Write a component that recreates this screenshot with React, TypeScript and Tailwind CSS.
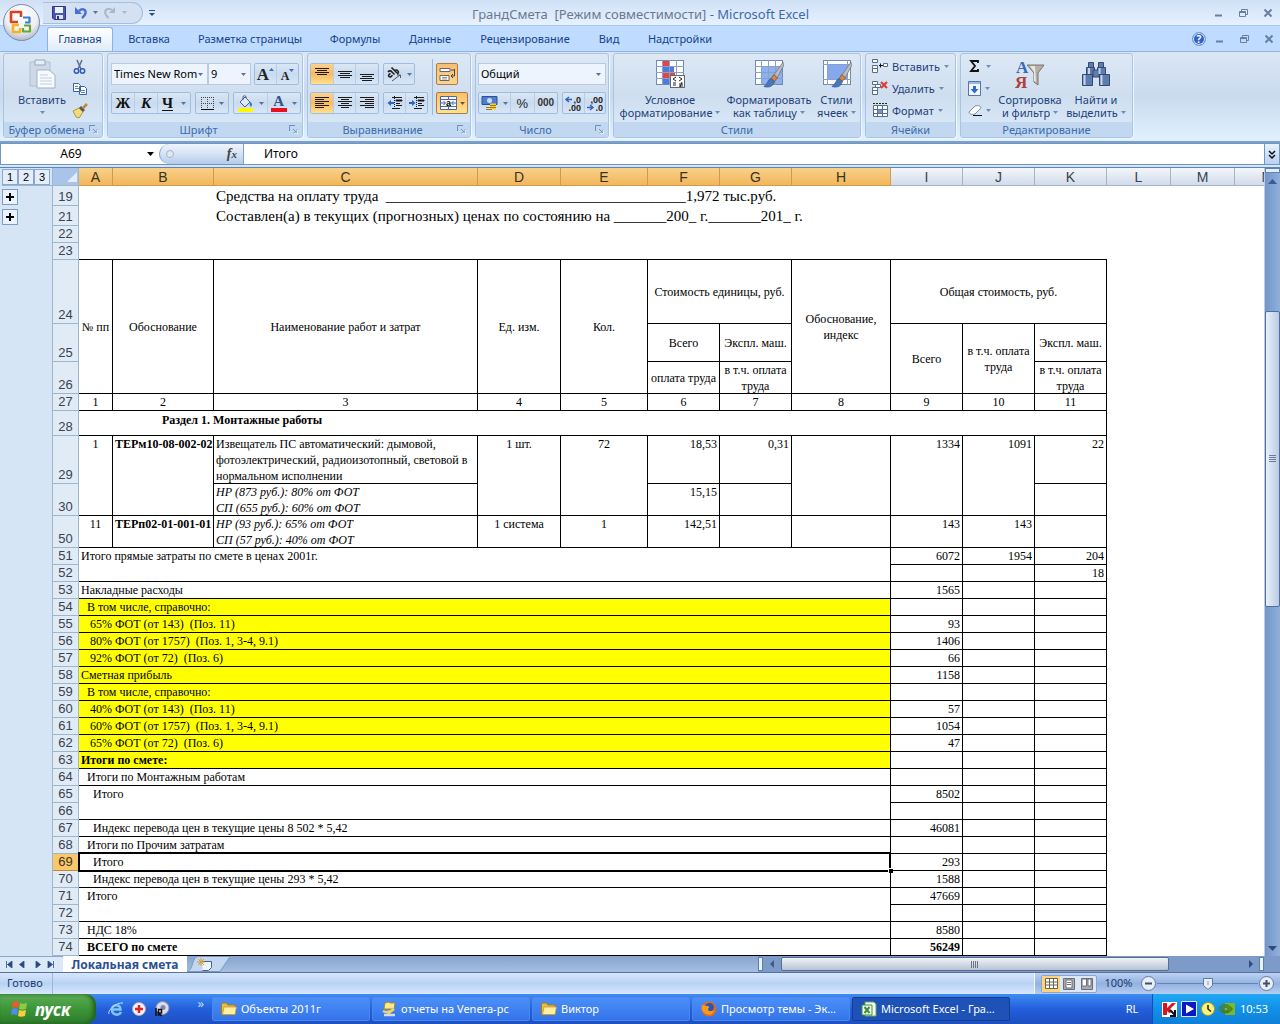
import React from "react";

const UI = "font-['Noto_Sans','Open_Sans',sans-serif]";

function Caret({ className = "" }: { className?: string }) {
  return (
    <svg width="5" height="3" viewBox="0 0 5 3" className={"shrink-0 " + className} aria-hidden="true">
      <path d="M0 0h5L2.5 3z" fill="currentColor" />
    </svg>
  );
}

function Launcher({ label }: { label: string }) {
  return (
    <button aria-label={label} className="ml-auto mr-1 text-[#6d8fbd]">
      <svg width="9" height="9" viewBox="0 0 9 9" fill="none" stroke="currentColor">
        <path d="M.5 6V.5H6M4 4l3 3M8 4.5V8H4.500" />
        <path d="M8.500 5v3.500H5" stroke="#fff" strokeOpacity=".7" />
      </svg>
    </button>
  );
}

function Group({ title, width, launcher, children }: { title: string; width: string; launcher?: boolean; children: React.ReactNode }) {
  return (
    <section
      aria-label={title}
      className={
        "flex h-[85px] shrink-0 flex-col overflow-hidden rounded-[3px] border border-[#a9c3e2] bg-linear-to-b from-[#dde8f5] via-[#cfdeef] to-[#dcebfa] shadow-[1px_1px_0_#eef6ff] " +
        width
      }
    >
      <div className="h-[68px]">{children}</div>
      <div className="flex h-[15px] items-center whitespace-nowrap bg-[#c1d8f0] text-[11px] leading-[15px] text-[#3e6aaa]">
        <span className={launcher ? "ml-auto" : "mx-auto"}>{title}</span>
        {launcher && <Launcher label={title + ": параметры"} />}
      </div>
    </section>
  );
}

const strip = "flex h-[22px] shrink-0 items-stretch rounded-[2px] border border-[#9ebde2] bg-linear-to-b from-[#dbe7f5] via-[#c9dbef] to-[#d8e6f7] divide-x divide-[#b7cde8]";
const cell = "flex flex-1 items-center justify-center gap-[5px] text-[#5673a0]";
const hot = "flex flex-1 items-center justify-center bg-linear-to-b from-[#fdd28f] via-[#fcb95a] to-[#ffe08f]";

function Lines({ kind }: { kind: "top" | "mid" | "bot" | "left" | "center" | "right" }) {
  const d = {
    top: "M1 2.500h14M3 4.500h10M1 6.500h14M3 8.500h10",
    mid: "M1 5.500h14M3 7.500h10M1 9.500h14M3 11.500h10",
    bot: "M1 8.500h14M3 10.500h10M1 12.500h14M3 14.500h10",
    left: "M1 2.500h14M1 4.500h9M1 6.500h14M1 8.500h9M1 10.500h14M1 12.500h9",
    center: "M1 2.500h14M4 4.500h8M1 6.500h14M4 8.500h8M1 10.500h14M4 12.500h8",
    right: "M1 2.500h14M6 4.500h9M1 6.500h14M6 8.500h9M1 10.500h14M6 12.500h9",
  }[kind];
  return (
    <svg width="16" height="16" viewBox="0 0 16 16" stroke="#1a1a1a">
      <path d={d} />
    </svg>
  );
}

function Indent({ flip }: { flip?: boolean }) {
  return (
    <svg width="16" height="16" viewBox="0 0 16 16" stroke="#1a1a1a">
      <path d="M5 2.500h10M9 5.500h6M9 8.500h4M9 10.500h6M5 13.500h8" />
      <path d="M9 5h6v1H9z" />
      <path d={flip ? "M0 8h4" : "M3 8h4"} stroke="#2d62c9" strokeWidth="2" />
      <path d={flip ? "M3 5l3.500 3L3 11z" : "M4 5L.5 8 4 11z"} fill="#2d62c9" stroke="none" />
      <path d="M7.500 1v14" strokeDasharray="1 1" />
    </svg>
  );
}

function Decimals({ less }: { less?: boolean }) {
  return (
    <svg width="18" height="16" viewBox="0 0 18 16" fontFamily="Liberation Sans, sans-serif" fontSize="9" fontWeight="bold" fill="#222">
      <text x="17" y="8" textAnchor="end">{less ? ",00" : ",0"}</text>
      <text x="17" y="16" textAnchor="end">{less ? ",0" : ",00"}</text>
      <path d={less ? "M1 12.500h5M4 10l3 2.500L4 15" : "M3 4.500h5M5 2L2 4.500 5 7"} fill="none" stroke="#2d62c9" strokeWidth="1.500" />
    </svg>
  );
}

function GridIcon({ kind }: { kind: "cond" | "table" | "style" }) {
  return (
    <svg width="30" height="30" viewBox="0 0 30 30" aria-hidden="true">
      <rect x="1.500" y="1.500" width="27" height="24" fill="#fff" stroke="#7088b4" />
      {kind === "table" && <rect x="8" y="7" width="20" height="18" fill="#8db0f0" />}
      {kind === "style" && <rect x="6" y="6" width="19" height="14" fill="#86a9ee" />}
      {kind === "cond" && (
        <>
          <path d="M8 2h6v5H8zM8 14h12v5H8z" fill="#e4463c" />
          <path d="M8 8h11v5H8zM8 20h6v5H8z" fill="#4d7bdd" />
        </>
      )}
      {kind === "style" ? (
        <path d="M1 5.500h28M1 20.500h28M5.500 1v25M25.500 1v25" stroke="#8aa0c8" />
      ) : (
        <path d="M1 7.500h28M1 13.500h28M1 19.500h28M7.500 1v25M14.500 1v25M21.500 1v25" stroke="#8aa0c8" />
      )}
      {kind === "cond" ? (
        <>
          <rect x="15.500" y="16.500" width="14" height="12" fill="#fff" stroke="#667" />
          <path d="M21 18l-3 2 3 2M18 24h3M18 26h3M24 18l3 2-3 2M24 25h4M24 27h4M27 23l-2 5" stroke="#222" fill="none" />
        </>
      ) : (
        <>
          <path d="M29 3L20 16l3 3 6.500-12z" fill="#b9bcc4" stroke="#6b6b78" strokeWidth=".7" />
          <path d="M20 15.500l-3 4 3 3 3.500-3.500z" fill="#d9853a" stroke="#7d4a1e" strokeWidth=".7" />
          <path d="M17 19.500c-3 1-3 5-7 8 5 1.500 9 0 10.500-5z" fill="#4a78b8" stroke="#2f5590" strokeWidth=".7" />
        </>
      )}
    </svg>
  );
}

function BigButton({ icon, a, b, width }: { icon: React.ReactNode; a: string; b?: string; width: string }) {
  return (
    <button className={"flex shrink-0 flex-col items-center whitespace-nowrap pt-[5px] text-[11px] leading-[13px] text-[#1e3f7a] " + width}>
      <span className="mb-[4px] flex h-[30px] items-center justify-center">{icon}</span>
      <span>{a}</span>
      <span className="flex h-[13px] items-center gap-[3px]">
        {b}
        <Caret className="text-[#6f8db8]" />
      </span>
    </button>
  );
}

function SmallButton({ icon, text, label }: { icon: React.ReactNode; text?: string; label?: string }) {
  return (
    <button aria-label={label} className="flex h-[22px] items-center gap-[4px] text-[11px] leading-[13px] text-[#1e3f7a]">
      {icon}
      {text && <span>{text}</span>}
      <Caret className="text-[#6f8db8]" />
    </button>
  );
}

function Combo({ label, value, width }: { label: string; value: string; width: string }) {
  return (
    <label className={"relative flex h-[22px] shrink-0 items-center border border-[#b3cbe8] bg-[#edf4fd] " + width}>
      <select aria-label={label} className="w-full appearance-none overflow-hidden bg-transparent pl-[2px] text-[11px] leading-[18px] text-black outline-none">
        <option>{value}</option>
      </select>
      <Caret className="pointer-events-none absolute right-[4px] text-[#5673a0]" />
    </label>
  );
}

function WindowButtons() {
  return (
    <div className="flex items-center gap-[14px] text-[#6b7f9d]">
      <button aria-label="Свернуть"><svg width="10" height="10" viewBox="0 0 10 10"><path d="M1 7.500h7" stroke="currentColor" strokeWidth="2" /></svg></button>
      <button aria-label="Восстановить"><svg width="11" height="10" viewBox="0 0 11 10" fill="none" stroke="currentColor"><path d="M1.500 3.500h6v5h-6zM3.500 3V1.500h6v5H8M1.500 4.500h6" /></svg></button>
      <button aria-label="Закрыть"><svg width="10" height="10" viewBox="0 0 10 10"><path d="M1.500 1.500l7 7M8.500 1.500l-7 7" stroke="currentColor" strokeWidth="2" /></svg></button>
    </div>
  );
}

function Orb() {
  return (
    <button aria-label="Кнопка Office" className="absolute left-[2px] top-[3px] z-10">
      <svg width="39" height="39" viewBox="0 0 39 39">
        <defs>
          <radialGradient id="orb" cx=".5" cy=".3" r=".75">
            <stop offset="0" stopColor="#fff" />
            <stop offset=".6" stopColor="#eceff4" />
            <stop offset="1" stopColor="#a5afc0" />
          </radialGradient>
        </defs>
        <circle cx="19.500" cy="19.500" r="18" fill="url(#orb)" stroke="#7c8ba5" />
        <g fill="none" strokeWidth="2.600" strokeLinejoin="round">
          <path d="M16 19H9V9h10v5" stroke="#d9431e" />
          <path d="M21 14.500h6.500v5H23" stroke="#3b7fd4" strokeWidth="2.200" />
          <path d="M18 25v4h-7v-7h6" stroke="#f0b51f" />
          <path d="M21 25v3.500h7v-6h-6" stroke="#6aa636" strokeWidth="2.200" />
        </g>
      </svg>
    </button>
  );
}

const tabs: [string, string][] = [
  ["Вставка", "w-[70px]"],
  ["Разметка страницы", "w-[132px]"],
  ["Формулы", "w-[78px]"],
  ["Данные", "w-[72px]"],
  ["Рецензирование", "w-[118px]"],
  ["Вид", "w-[50px]"],
  ["Надстройки", "w-[92px]"],
];

function Header() {
  return (
    <header className="relative text-[#15428b]">
      <Orb />
      <div className="flex h-[26px] items-center border-b border-[#a9c8f0] bg-linear-to-b from-[#cfe0f5] via-[#dbe9fb] to-[#e6f1ff] pr-[7px]">
        <div className="ml-[43px] flex h-[22px] w-[100px] items-center gap-[5px] rounded-r-full border border-l-0 border-[#a7bedc] bg-[#d3e1f3]">
          <button aria-label="Сохранить" className="ml-[9px]">
            <svg width="14" height="14" viewBox="0 0 14 14"><path d="M.5.5h13v13H2L.5 12z" fill="#4a57b5" stroke="#2e377f" /><path d="M3 1h8v6H3z" fill="#eef2fc" /><path d="M4 9h7v4H4z" fill="#dfe4f5" /><path d="M5 10h2v3H5z" fill="#2e377f" /></svg>
          </button>
          <button aria-label="Отменить" className="ml-[3px] flex items-center gap-[5px]">
            <svg width="14" height="13" viewBox="0 0 14 13"><path d="M5 5c3-3 7-2 6.500 2-.3 2-1.500 3.500-3.500 5" fill="none" stroke="#4a6fd0" strokeWidth="2.500" /><path d="M1 1v7h7z" fill="#4a6fd0" /></svg>
            <Caret className="text-[#5673a0]" />
          </button>
          <button aria-label="Повторить" className="flex items-center gap-[5px] text-[#a9b7cc]">
            <svg width="14" height="13" viewBox="0 0 14 13"><path d="M9 4c-4-3-8 0-6.500 4 .5 1.500 1.500 2.500 3 4" fill="none" stroke="currentColor" strokeWidth="2" /><path d="M12 1v6H6z" fill="currentColor" /></svg>
            <Caret />
          </button>
        </div>
        <button aria-label="Настройка панели быстрого доступа" className="ml-[6px]">
          <svg width="6" height="6" viewBox="0 0 6 6"><path d="M0 .5h6" stroke="#2b4a80" /><path d="M0 3h6L3 6z" fill="#2b4a80" /></svg>
        </button>
        <h1 className="flex-1 whitespace-pre pr-[88px] pt-[3px] text-center text-[13px] leading-[18px] text-[#6b7890]">
          {"ГрандСмета  [Режим совместимости]"} <span className="text-[#3e6aaa]">- Microsoft Excel</span>
        </h1>
        <WindowButtons />
      </div>
      <nav className="flex h-[25px] items-end bg-[#bfdbff] pl-[47px] pr-[6px] text-[11px]">
        <a href="#home" className="flex h-[24px] w-[66px] items-center justify-center rounded-t-[3px] border border-b-0 border-[#8db2e3] bg-linear-to-b from-white to-[#e0ecf9]">Главная</a>
        <span className="w-px" />
        {tabs.map(([t, w]) => (
          <a key={t} href="#tab" className={"flex h-[24px] shrink-0 items-center justify-center whitespace-nowrap " + w}>{t}</a>
        ))}
        <div className="ml-auto flex h-[25px] items-center gap-[9px]">
          <button aria-label="Справка" className="flex size-[14px] items-center justify-center rounded-full border border-[#7f9fd8] bg-[#2f62c8] text-[10px] font-bold leading-none text-white shadow-[inset_0_0_0_1px_#dbe8ff]">?</button>
          <WindowButtons />
        </div>
      </nav>
    </header>
  );
}

function Ribbon() {
  return (
    <div className="flex h-[92px] items-start gap-[4px] border-t border-b-2 border-t-[#8db2e3] border-b-[#7d9fc9] bg-linear-to-b from-[#dbe6f4] via-[#c9daee] to-[#e0f2fd] px-[3px] pt-px">
      <Group title="Буфер обмена" width="w-[100px]" launcher>
        <div className="flex">
          <BigButton
            a="Вставить"
            width="w-[76px]"
            icon={
              <svg width="28" height="30" viewBox="0 0 28 30"><path d="M2 3h20v24H2z" fill="#cfd8e6" stroke="#b3bfd2" /><path d="M7 1h10v5H7z" fill="#e7edf5" stroke="#98a7bf" /><path d="M9 11h12l6 5v13H9z" fill="#f7faff" stroke="#a3b1c9" /><path d="M12 16h8M12 19h12M12 22h12M12 25h12" stroke="#c3cede" /></svg>
            }
          />
          <div className="-ml-[8px] flex flex-col items-center gap-[6px] pt-[5px]">
            <button aria-label="Вырезать"><svg width="16" height="16" viewBox="0 0 16 16" fill="none"><path d="M5 1l4 9M10 1L6 10" stroke="#5a6f94" strokeWidth="1.500" /><circle cx="4.500" cy="12" r="2.200" stroke="#2d5bb8" strokeWidth="1.500" /><circle cx="10.500" cy="12" r="2.200" stroke="#2d5bb8" strokeWidth="1.500" /></svg></button>
            <button aria-label="Копировать"><svg width="16" height="16" viewBox="0 0 16 16" fill="#fff" stroke="#3d62ad"><path d="M1.500 2.500h5l2 2v6h-7zM7.500 5.500h5l2 2v6h-7z" /><path d="M3 5.500h3M3 7.500h4M9 9.500h4M9 11.500h4" strokeWidth=".8" /></svg></button>
            <button aria-label="Формат по образцу"><svg width="16" height="16" viewBox="0 0 16 16"><path d="M1 8l6-3 4 4-4 6-3-1z" fill="#f3dc78" stroke="#a08428" strokeWidth=".8" /><path d="M7 5l4 4 2-2-4-4z" fill="#5d5a52" /><path d="M11 5l4-4" stroke="#b98a3c" strokeWidth="2.500" /></svg></button>
          </div>
        </div>
      </Group>

      <Group title="Шрифт" width="w-[196px]" launcher>
        <div className="flex flex-col gap-[7px] px-[3px] pt-[9px]">
          <div className="flex">
            <Combo label="Шрифт" value="Times New Rom" width="w-[97px]" />
            <Combo label="Размер шрифта" value="9" width="w-[43px]" />
            <div className={strip + " ml-[3px] w-[45px]"}>
              <button aria-label="Увеличить размер" className="flex flex-1 items-center justify-center font-['Liberation_Serif',serif] text-[17px] font-bold leading-none text-[#222]">A<Caret className="mb-[9px] rotate-180 text-[#3c6fbf]" /></button>
              <button aria-label="Уменьшить размер" className="flex flex-1 items-center justify-center pt-[3px] font-['Liberation_Serif',serif] text-[12px] font-bold leading-none text-[#222]">A<Caret className="mb-[11px] text-[#3c6fbf]" /></button>
            </div>
          </div>
          <div className="flex gap-[4px]">
            <div className={strip + " w-[80px] font-['Liberation_Serif',serif] text-[15px] font-bold leading-none text-[#111]"}>
              <button className="w-[23px]">Ж</button>
              <button className="w-[23px] italic">К</button>
              <button className="flex flex-1 items-center justify-center gap-[8px]"><span className="underline underline-offset-2">Ч</span><Caret className="text-[#5673a0]" /></button>
            </div>
            <div className={strip + " w-[34px]"}>
              <button aria-label="Границы" className={cell}>
                <svg width="13" height="13" viewBox="0 0 13 13" stroke="#444"><path d="M.5 0v12M6.500 0v12M12.500 0v12M0 .5h13M0 6.500h13" strokeDasharray="1 1" /><path d="M0 12.500h13" stroke="#111" /></svg>
                <Caret />
              </button>
            </div>
            <div className={strip + " w-[68px]"}>
              <button aria-label="Цвет заливки" className={cell}>
                <svg width="17" height="17" viewBox="0 0 17 17"><path d="M3 7l5-5 5 5-5 5z" fill="#dfe8f5" stroke="#47608e" /><path d="M6 5V2c0-2 4-1.500 3 1" fill="none" stroke="#47608e" /><path d="M13 7c3 1 2 4 1 5-1-1-2-3-1-5z" fill="#3e74d6" /><path d="M1 13h15v4H1z" fill="#fffa00" /></svg>
                <Caret />
              </button>
              <button aria-label="Цвет текста" className={cell}>
                <span className="flex w-[16px] flex-col items-center border-b-4 border-[#e8101c] font-['Liberation_Serif',serif] text-[15px] font-bold leading-[13px] text-[#34538a]">A</span>
                <Caret />
              </button>
            </div>
          </div>
        </div>
      </Group>

      <Group title="Выравнивание" width="w-[164px]" launcher>
        <div className="flex pl-[2px] pt-[9px]">
          <div className="flex flex-col gap-[7px]">
            <div className="flex gap-[4px]">
              <div className={strip + " w-[69px]"}>
                <button aria-label="По верхнему краю" className={hot}><Lines kind="top" /></button>
                <button aria-label="По середине" className={cell}><Lines kind="mid" /></button>
                <button aria-label="По нижнему краю" className={cell}><Lines kind="bot" /></button>
              </div>
              <div className={strip + " w-[32px]"}>
                <button aria-label="Ориентация" className={cell}>
                  <svg width="16" height="16" viewBox="0 0 16 16"><path d="M2 6c1-1.500 3-1.500 4 0l2.500 2.500M4.500 7.500C3 8 2 9.500 3 10.500s3 0 3.200-1.500M5.500 1.500l5.500 5.500M8 5c1-1.500 3-1.200 3.800-.2 1 1 .8 2.700-.8 3.200" fill="none" stroke="#222" strokeWidth="1.600" /><path d="M6 15l8-6M11 9h3.500v3" stroke="#555" fill="none" /></svg>
                  <Caret />
                </button>
              </div>
            </div>
            <div className="flex gap-[4px]">
              <div className={strip + " w-[69px]"}>
                <button aria-label="По левому краю" className={hot}><Lines kind="left" /></button>
                <button aria-label="По центру" className={cell}><Lines kind="center" /></button>
                <button aria-label="По правому краю" className={cell}><Lines kind="right" /></button>
              </div>
              <div className={strip + " w-[45px]"}>
                <button aria-label="Уменьшить отступ" className={cell}><Indent /></button>
                <button aria-label="Увеличить отступ" className={cell}><Indent flip /></button>
              </div>
            </div>
          </div>
          <div className="-mt-[4px] mr-[3px] ml-[4px] h-[56px] w-px bg-[#9fb8d8]" />
          <div className="flex flex-col gap-[7px]">
            <button aria-label="Перенос текста" className="flex h-[22px] w-[22px] items-center justify-center rounded-[2px] border border-[#a67f4a] bg-linear-to-b from-[#f8bd74] to-[#fdd48c]">
              <svg width="17" height="17" viewBox="0 0 17 17"><path d="M1 2.500h10v3H1zM1 9.500h9v5H1z" fill="#fff" stroke="#666" /><path d="M3 11.500h5M3 13h5" stroke="#777" strokeWidth=".8" /><path d="M15.500 3v7H12M14 8l-2 2 2 2M12 4h3" stroke="#444" fill="none" /></svg>
            </button>
            <button aria-label="Объединить" className="flex h-[22px] w-[32px] items-center justify-center gap-[3px] rounded-[2px] border border-[#a67f4a] bg-linear-to-b from-[#fcc066] to-[#ffe08f] text-[#6b5a3a]">
              <svg width="17" height="16" viewBox="0 0 17 16"><path d="M.5 1.500h16v13H.5z" fill="#fff" stroke="#4a68a8" /><path d="M0 4.500h17M0 11.500h17M8.500 1v3M8.500 12v3" stroke="#4a68a8" /><path d="M1 8h4M16 8h-4M3.500 6l2 2-2 2M13.500 6l-2 2 2 2" stroke="#2d62c9" fill="none" /><text x="6" y="11" fontFamily="Liberation Sans, sans-serif" fontSize="9" fontWeight="bold">a</text></svg>
              <Caret />
            </button>
          </div>
        </div>
      </Group>

      <Group title="Число" width="w-[134px]" launcher>
        <div className="flex flex-col gap-[7px] px-[2px] pt-[9px]">
          <Combo label="Числовой формат" value="Общий" width="w-[128px]" />
          <div className="flex gap-[4px]">
            <div className={strip + " w-[80px]"}>
              <button aria-label="Денежный формат" className="flex w-[32px] items-center justify-center gap-[5px] text-[#5673a0]">
                <svg width="17" height="16" viewBox="0 0 17 16"><path d="M1 1.500h15v8H1z" fill="#4f7ed0" stroke="#2d4f94" /><circle cx="8.500" cy="5.500" r="2.500" fill="#c9dbf7" /><path d="M9 8.500h6v6H9z" fill="#f2cf3e" /><path d="M9 10.500h6M9 12.500h6M5 12.500h5M5 14.500h6" stroke="#a37d10" /></svg>
                <Caret />
              </button>
              <button className="flex-1 font-['Liberation_Sans',sans-serif] text-[13px] leading-none text-[#222]">%</button>
              <button className="flex-1 font-['Liberation_Sans',sans-serif] text-[10px] font-bold leading-none text-[#333]">000</button>
            </div>
            <div className={strip + " w-[44px]"}>
              <button aria-label="Увеличить разрядность" className={cell}><Decimals /></button>
              <button aria-label="Уменьшить разрядность" className={cell}><Decimals less /></button>
            </div>
          </div>
        </div>
      </Group>

      <Group title="Стили" width="w-[248px]">
        <div className="flex gap-[2px] pl-[3px]">
          <BigButton icon={<GridIcon kind="cond" />} a="Условное" b="форматирование" width="w-[106px]" />
          <BigButton icon={<GridIcon kind="table" />} a="Форматировать" b="как таблицу" width="w-[88px]" />
          <BigButton icon={<GridIcon kind="style" />} a="Стили" b="ячеек" width="w-[43px]" />
        </div>
      </Group>

      <Group title="Ячейки" width="w-[91px]">
        <div className="flex flex-col pl-[6px] pt-px">
          <SmallButton text="Вставить" icon={<svg width="16" height="16" viewBox="0 0 16 16" fill="#fff" stroke="#5a6c8c"><path d="M.5 1.500h5v3h-5zM.5 7.500h5v3h-5zM.5 10.500h5v4h-5zM11.500 5.500h4v3h-4z" /><path d="M7 7.500h4M8.500 5.500v4" stroke="#111" /></svg>} />
          <SmallButton text="Удалить" icon={<svg width="16" height="16" viewBox="0 0 16 16" fill="#fff" stroke="#5a6c8c"><path d="M.5 1.500h5v3h-5zM3.500 4.500h5v3h-5zM.5 7.500h5v3h-5zM.5 10.500h5v4h-5z" /><path d="M9 2l6 6M15 2L9 8" stroke="#e03a2c" strokeWidth="2" /></svg>} />
          <SmallButton text="Формат" icon={<svg width="16" height="16" viewBox="0 0 16 16" fill="#fff" stroke="#5a6c8c"><path d="M1.500 3.500h14v11h-14z" /><path d="M1 7.500h15M1 11.500h15M5.500 3v12M10.500 3v12" /><path d="M6 8h4v3H6z" fill="#6f97e6" stroke="none" /><path d="M1 1.500h14" strokeDasharray="2 1" stroke="#222" /></svg>} />
        </div>
      </Group>

      <Group title="Редактирование" width="w-[173px]">
        <div className="flex">
          <div className="flex w-[34px] flex-col pl-[7px] pt-px">
            <SmallButton label="Сумма" icon={<svg width="14" height="14" viewBox="0 0 14 14"><path d="M10 4V2H3l4 5-4 5h7v-2" fill="none" stroke="#111" strokeWidth="1.800" /></svg>} />
            <SmallButton label="Заполнить" icon={<svg width="13" height="15" viewBox="0 0 13 15"><path d="M.5.5h12v14H.5z" fill="#f2f6fd" stroke="#5273b5" /><path d="M1 1h11v2H1z" fill="#9db8e4" /><path d="M5 5h3v3h2.500l-4 4.500L2.500 8H5z" fill="#3468d0" /></svg>} />
            <SmallButton label="Очистить" icon={<svg width="14" height="14" viewBox="0 0 14 14"><path d="M1 9l6-6c3-1 6 0 6 2l-6 6c-3 1-6 0-6-2z" fill="#fff" stroke="#8288a0" /><path d="M5 12.500h9" stroke="#111" /></svg>} />
          </div>
          <BigButton
            a="Сортировка"
            b="и фильтр"
            width="w-[70px]"
            icon={
              <svg width="30" height="30" viewBox="0 0 30 30"><text x="1" y="14" fontFamily="Liberation Serif, serif" fontWeight="bold" fontSize="17" fill="#3d65b5">А</text><text x="0" y="29" fontFamily="Liberation Serif, serif" fontWeight="bold" fontSize="17" fill="#b0403a">Я</text><path d="M12 6h17l-6 8v12l-4-3v-9z" fill="#b5afa8" stroke="#7c756c" /><path d="M15 7h5l1 16-2-1v-9z" fill="#e9e6e1" /></svg>
            }
          />
          <BigButton
            a="Найти и"
            b="выделить"
            width="w-[62px]"
            icon={
              <svg width="30" height="28" viewBox="0 0 30 28"><g fill="#5f7cae" stroke="#34496f"><path d="M7.500 2.500h5v5h-5zM17.500 2.500h5v5h-5zM5.500 7.500h8v7h-8zM16.500 7.500h8v7h-8zM1.500 14.500h10v11h-10zM18.500 14.500h10v11h-10z" /><path d="M12 10h6v7h-6z" /></g><path d="M3.500 15v10M20.500 15v10M8 8v6M18.500 8v6" stroke="#c7d5ee" strokeWidth="2" /></svg>
            }
          />
        </div>
      </Group>
    </div>
  );
}

function FormulaBar() {
  return (
    <div className="flex h-[25px] items-start border-b border-[#5d84b5] bg-[#d6e6f8]">
      <div className="flex h-[22px] w-full border border-[#6f96c8] bg-white text-[12px] text-black">
        <input aria-label="Имя" defaultValue="A69" className="w-[140px] bg-white text-center outline-none" />
        <button aria-label="Список имён" className="flex w-[18px] items-center justify-center"><svg width="7" height="4" viewBox="0 0 7 4"><path d="M0 0h7L3.500 4z" /></svg></button>
        <div className="flex w-[85px] items-center justify-between rounded-l-full border-r border-l border-[#7ea0cf] bg-linear-to-b from-[#eef4fd] via-[#d5e3f5] to-[#b3cbea] pl-[6px] pr-[6px]">
          <span className="size-[8px] rounded-full border border-[#a4b3c8] bg-[#e3e8f0]" />
          <button aria-label="Вставить функцию" className="font-['Liberation_Serif',serif] text-[14px] font-bold italic leading-none text-[#444]">f<span className="text-[11px]">x</span></button>
        </div>
        <input aria-label="Строка формул" defaultValue="Итого" className="min-w-0 flex-1 bg-white pl-[20px] text-[12px] outline-none" />
        <button aria-label="Развернуть строку формул" className="flex w-[15px] items-center justify-center border-l border-[#6f96c8] bg-linear-to-b from-[#e9f2fd] to-[#b9d2f0]">
          <svg width="8" height="9" viewBox="0 0 8 9" fill="none" stroke="#111" strokeWidth="1.500"><path d="M1 1l3 3 3-3M1 5l3 3 3-3" /></svg>
        </button>
      </div>
    </div>
  );
}

const letters = ["A", "B", "C", "D", "E", "F", "G", "H", "I", "J", "K", "L", "M", "N"];

const headBase = "border-r border-b text-[14px] leading-[16px] font-normal p-0 overflow-hidden ";
const td = "border-r border-b border-black px-[2px] py-0 ";

function RowHead({ n, active }: { n: number; active?: boolean }) {
  return (
    <th
      scope="row"
      className={
        "border-r border-b p-0 text-center align-bottom text-[13px] font-normal leading-[16px] " +
        (active ? "border-[#c08a3c] bg-[#fbc76b] text-[#3a3320]" : "border-[#9eb6ce] bg-[#e1ebf6] text-[#39424f]")
      }
    >
      {n}
    </th>
  );
}

type Sum = { n: number; t?: string; pad?: string; y?: boolean; b?: boolean; span?: boolean; v?: string[] };
const p0 = "pl-[2px]";
const p1 = "pl-[8px]";
const p2 = "pl-[11px]";
const p3 = "pl-[14px]";
const sums: Sum[] = [
  { n: 51, t: "Итого прямые затраты по смете в ценах 2001г.", pad: p0, span: true, v: ["6072", "1954", "204"] },
  { n: 52, v: ["", "", "18"] },
  { n: 53, t: "Накладные расходы", pad: p0, v: ["1565"] },
  { n: 54, t: "В том числе, справочно:", pad: p1, y: true },
  { n: 55, t: "65% ФОТ (от 143)  (Поз. 11)", pad: p2, y: true, v: ["93"] },
  { n: 56, t: "80% ФОТ (от 1757)  (Поз. 1, 3-4, 9.1)", pad: p2, y: true, v: ["1406"] },
  { n: 57, t: "92% ФОТ (от 72)  (Поз. 6)", pad: p2, y: true, v: ["66"] },
  { n: 58, t: "Сметная прибыль", pad: p0, y: true, v: ["1158"] },
  { n: 59, t: "В том числе, справочно:", pad: p1, y: true },
  { n: 60, t: "40% ФОТ (от 143)  (Поз. 11)", pad: p2, y: true, v: ["57"] },
  { n: 61, t: "60% ФОТ (от 1757)  (Поз. 1, 3-4, 9.1)", pad: p2, y: true, v: ["1054"] },
  { n: 62, t: "65% ФОТ (от 72)  (Поз. 6)", pad: p2, y: true, v: ["47"] },
  { n: 63, t: "Итоги по смете:", pad: p0, y: true, b: true },
  { n: 64, t: "Итоги по Монтажным работам", pad: p1 },
  { n: 65, t: "Итого", pad: p3, span: true, v: ["8502"] },
  { n: 66 },
  { n: 67, t: "Индекс перевода цен в текущие цены 8 502 * 5,42", pad: p3, v: ["46081"] },
  { n: 68, t: "Итоги по Прочим затратам", pad: p1 },
  { n: 69, t: "Итого", pad: p3, v: ["293"] },
  { n: 70, t: "Индекс перевода цен в текущие цены 293 * 5,42", pad: p3, v: ["1588"] },
  { n: 71, t: "Итого", pad: p1, span: true, v: ["47669"] },
  { n: 72 },
  { n: 73, t: "НДС 18%", pad: p1, v: ["8580"] },
  { n: 74, t: "ВСЕГО по смете", pad: p1, b: true, v: ["56249"] },
];

function Sheet() {
  return (
    <table className="w-0 min-w-full table-fixed border-separate border-spacing-0 bg-white font-['Liberation_Serif',serif] text-[12px] leading-[16px] text-black">
      <colgroup>
        <col className="w-[26px]" />
        <col className="w-[34px]" />
        <col className="w-[101px]" />
        <col className="w-[264px]" />
        <col className="w-[83px]" />
        <col className="w-[87px]" />
        <col className="w-[72px]" />
        <col className="w-[72px]" />
        <col className="w-[99px]" />
        <col className="w-[72px]" />
        <col className="w-[72px]" />
        <col className="w-[72px]" />
        <col className="w-[64px]" />
        <col className="w-[64px]" />
        <col className="w-[64px]" />
        <col />
      </colgroup>
      <thead className="font-['Liberation_Sans',sans-serif]">
        <tr className="h-[18px]">
          <th className="border-r border-b border-[#9eb6ce] bg-[#a9c4e9] p-0" aria-label="Выделить всё">
            <svg width="12" height="12" viewBox="0 0 12 12" className="ml-auto"><path d="M11 1v10H1z" fill="#e3edf9" /></svg>
          </th>
          {letters.map((l, i) => (
            <th key={l} scope="col" className={headBase + (i < 8 ? "border-[#d49a4a] bg-linear-to-b from-[#f9d08a] to-[#f1b75a] text-[#3a3320]" : "border-[#9eb6ce] bg-linear-to-b from-[#f3f7fc] to-[#d3dbe9] text-[#39424f]")}>
              {l}
            </th>
          ))}
          <th className="border-b border-[#9eb6ce] bg-[#e4ebf4] p-0" />
        </tr>
      </thead>
      <tbody className="[&_th]:font-['Liberation_Sans',sans-serif]">
        <tr className="h-[20px]">
          <RowHead n={19} />
          <td colSpan={2} className="p-0" />
          <td colSpan={6} className="whitespace-pre p-0 pl-[2px] text-[15px] leading-[18px]">
            {"Средства на оплату труда  ________________________________________1,972 тыс.руб."}
          </td>
        </tr>
        <tr className="h-[20px]">
          <RowHead n={21} />
          <td colSpan={2} className="p-0" />
          <td colSpan={6} className="whitespace-pre p-0 pl-[2px] text-[15px] leading-[18px]">
            {"Составлен(а) в текущих (прогнозных) ценах по состоянию на _______200_ г._______201_ г."}
          </td>
        </tr>
        <tr className="h-[17px]"><RowHead n={22} /></tr>
        <tr className="h-[17px]"><RowHead n={23} /><td colSpan={11} className="border-b border-black p-0" /></tr>
        <tr className="h-[64px] text-center">
          <RowHead n={24} />
          <td rowSpan={3} className={td + "whitespace-nowrap"}>№ пп</td>
          <td rowSpan={3} className={td}>Обоснование</td>
          <td rowSpan={3} className={td}>Наименование работ и затрат</td>
          <td rowSpan={3} className={td}>Ед. изм.</td>
          <td rowSpan={3} className={td}>Кол.</td>
          <td colSpan={2} className={td}>Стоимость единицы, руб.</td>
          <td rowSpan={3} className={td}>Обоснование, индекс</td>
          <td colSpan={3} className={td}>Общая стоимость, руб.</td>
        </tr>
        <tr className="h-[38px] text-center">
          <RowHead n={25} />
          <td className={td}>Всего</td>
          <td className={td}>Экспл. маш.</td>
          <td rowSpan={2} className={td}>Всего</td>
          <td rowSpan={2} className={td}>в т.ч. оплата<br />труда</td>
          <td className={td}>Экспл. маш.</td>
        </tr>
        <tr className="h-[32px] text-center">
          <RowHead n={26} />
          <td className={td + "whitespace-nowrap"}>оплата труда</td>
          <td className={td + "whitespace-nowrap"}><div className="h-[31px]">в т.ч. оплата<br />труда</div></td>
          <td className={td + "whitespace-nowrap"}><div className="h-[31px]">в т.ч. оплата<br />труда</div></td>
        </tr>
        <tr className="h-[17px] text-center">
          <RowHead n={27} />
          {[1, 2, 3, 4, 5, 6, 7, 8, 9, 10, 11].map((n) => <td key={n} className={td}>{n}</td>)}
        </tr>
        <tr className="h-[25px]">
          <RowHead n={28} />
          <td colSpan={11} className="border-r border-b border-black p-0 pl-[83px] align-top font-bold">
            <div className="pt-px">Раздел 1. Монтажные работы</div>
          </td>
        </tr>
        <tr className="h-[48px] align-top">
          <RowHead n={29} />
          <td rowSpan={2} className={td + "text-center"}>1</td>
          <td rowSpan={2} className={td + "whitespace-nowrap text-center font-bold"}>ТЕРм10-08-002-02</td>
          <td className={td}><div className="h-[47px] whitespace-nowrap">Извещатель ПС автоматический: дымовой,<br />фотоэлектрический, радиоизотопный, световой в<br />нормальном исполнении</div></td>
          <td rowSpan={2} className={td + "text-center"}>1 шт.</td>
          <td rowSpan={2} className={td + "text-center"}>72</td>
          <td className={td + "text-right"}>18,53</td>
          <td className={td + "text-right"}>0,31</td>
          <td rowSpan={2} className={td} />
          <td rowSpan={2} className={td + "text-right"}>1334</td>
          <td rowSpan={2} className={td + "text-right"}>1091</td>
          <td className={td + "text-right"}>22</td>
        </tr>
        <tr className="h-[32px] align-top">
          <RowHead n={30} />
          <td className={td + "italic"}><div className="h-[31px]">НР (873 руб.): 80% от ФОТ<br />СП (655 руб.): 60% от ФОТ</div></td>
          <td className={td + "text-right"}>15,15</td>
          <td className={td} />
          <td className={td} />
        </tr>
        <tr className="h-[32px] align-top">
          <RowHead n={50} />
          <td className={td + "text-center"}>11</td>
          <td className={td + "whitespace-nowrap text-center font-bold"}>ТЕРп02-01-001-01</td>
          <td className={td + "italic"}><div className="h-[31px]">НР (93 руб.): 65% от ФОТ<br />СП (57 руб.): 40% от ФОТ</div></td>
          <td className={td + "text-center"}>1 система</td>
          <td className={td + "text-center"}>1</td>
          <td className={td + "text-right"}>142,51</td>
          <td className={td} />
          <td className={td} />
          <td className={td + "text-right"}>143</td>
          <td className={td + "text-right"}>143</td>
          <td className={td} />
        </tr>
        {sums.map((s) => (
          <tr key={s.n} className={"h-[17px] align-top " + (s.b ? "font-bold" : "")}>
            <RowHead n={s.n} active={s.n === 69} />
            {s.t && (
              <td
                colSpan={8}
                rowSpan={s.span ? 2 : 1}
                className={"relative whitespace-pre border-r border-b border-black py-0 pr-0 " + s.pad + (s.y ? " bg-[#ffff00]" : "")}
              >
                {s.t}
                {s.n === 69 && (
                  <>
                    <span className="pointer-events-none absolute -inset-x-px -top-[2px] -bottom-[2px] z-10 border-2 border-black" />
                    <span className="absolute -right-[3px] -bottom-[3px] z-10 size-[5px] border-t border-l border-white bg-black" />
                  </>
                )}
              </td>
            )}
            {[0, 1, 2].map((i) => <td key={i} className={td + "text-right"}>{s.v?.[i] ?? ""}</td>)}
          </tr>
        ))}
      </tbody>
    </table>
  );
}

function Outline() {
  return (
    <aside aria-label="Структура" className="w-[53px] shrink-0 border-r border-[#9eb6ce] bg-[#d6e5f5] pl-[2px] font-['Liberation_Sans',sans-serif] text-[11px] text-black">
      <div className="flex h-[18px] items-center border-b border-[#9eb6ce]">
        {[1, 2, 3].map((n) => <button key={n} className="h-[16px] w-[16px] border border-[#8ba7cc] bg-[#e4eefa] leading-[14px]">{n}</button>)}
      </div>
      <div className="flex flex-col gap-[4px] pt-[3px]">
        {["19", "21"].map((n) => (
          <button key={n} aria-label={"Развернуть строку " + n} className="flex size-[16px] items-center justify-center border border-[#7f9cc5] bg-[#eaf2fb]">
            <svg width="8" height="8" viewBox="0 0 8 8"><path d="M0 4h8M4 0v8" stroke="#000" strokeWidth="2" /></svg>
          </button>
        ))}
      </div>
    </aside>
  );
}

function VScroll() {
  return (
    <div className="flex w-[16px] shrink-0 flex-col items-center border-l border-[#b9cde6] bg-linear-to-r from-[#7396c8] to-[#8fb0dc]">
      <span className="h-[5px] w-full border border-[#5d84b5] bg-[#e6f0fc]" />
      <button aria-label="Вверх" className="flex h-[16px] items-center"><svg width="9" height="5" viewBox="0 0 9 5"><path d="M0 5l4.500-5L9 5z" fill="#3c5a8c" /></svg></button>
      <div className="flex w-full flex-1 flex-col">
        <div className="flex-[122]" />
        <div className="flex w-full flex-[296] items-center justify-center rounded-[2px] border border-[#4f6f9f] bg-linear-to-r from-[#eaf0fa] to-[#b9cbe4]">
          <svg width="7" height="8" viewBox="0 0 7 8"><path d="M0 .5h7M0 2.500h7M0 4.500h7M0 6.500h7" stroke="#6a7f9f" /></svg>
        </div>
        <div className="flex-[334]" />
      </div>
      <button aria-label="Вниз" className="flex h-[16px] items-center"><svg width="9" height="5" viewBox="0 0 9 5"><path d="M0 0h9L4.500 5z" fill="#2f4a7c" /></svg></button>
    </div>
  );
}

function SheetTabs() {
  const nav = ["M1.500 0v7M7 0v7L2.500 3.500z", "M5 0v7L.5 3.500z", "M3 0v7l4.500-3.500z", "M6.500 0v7M1 0v7l4.500-3.500z"];
  return (
    <div className="flex h-[17px] items-stretch border-b border-[#5a70a0] bg-linear-to-b from-[#88a4cd] to-[#a4bfe0]">
      <div className="flex w-[63px] items-center gap-[6px] border-t border-[#8ba7cc] bg-[#dbe8f7] pl-[5px] text-[#2b4a80]">
        {nav.map((d, i) => (
          <button key={d} aria-label={["Первый лист", "Предыдущий лист", "Следующий лист", "Последний лист"][i]}>
            <svg width="8" height="7" viewBox="0 0 8 7"><path d={d} fill="currentColor" stroke="currentColor" strokeWidth=".8" /></svg>
          </button>
        ))}
      </div>
      <button className={"w-[124px] whitespace-nowrap bg-white text-[12px] font-bold leading-[15px] text-[#2a4f94] " + UI}>Локальная смета</button>
      <button aria-label="Вставить лист">
        <svg width="46" height="16" viewBox="0 0 46 16"><path d="M0 15.500c6 0 5-15 11-15h32L33 15.500z" fill="#c3d8f0" stroke="#7d98c0" /><path d="M15.500 5.500h9v6l-3 3h-6" fill="#eef4fc" stroke="#4c5f82" /><path d="M14 2v8M10 6h8M11 3l6 6M17 3l-6 6" stroke="#d79a35" /></svg>
      </button>
      <div className="flex-1" />
      <div className="flex w-[522px] items-stretch bg-[#7c9bc8]">
        <span className="my-px w-[5px] border border-[#5d7fae] bg-[#eaf3fd]" />
        <button aria-label="Влево" className="flex w-[18px] items-center justify-center"><svg width="4" height="8" viewBox="0 0 4 8"><path d="M4 0v8L0 4z" fill="#3c5a8c" /></svg></button>
        <div className="my-px flex flex-[388] items-center justify-center rounded-[2px] border border-[#5a6f90] bg-linear-to-b from-[#f1f4f8] to-[#b7c3d4]">
          <svg width="8" height="7" viewBox="0 0 8 7"><path d="M.5 0v7M2.500 0v7M4.500 0v7M6.500 0v7" stroke="#6a7587" /></svg>
        </div>
        <div className="flex-[73]" />
        <button aria-label="Вправо" className="flex w-[17px] items-center justify-center"><svg width="4" height="8" viewBox="0 0 4 8"><path d="M0 0v8l4-4z" fill="#2f4a7c" /></svg></button>
        <span className="my-px mr-[16px] w-[5px] border border-[#5d7fae] bg-[#eaf3fd]" />
      </div>
    </div>
  );
}

function StatusBar() {
  return (
    <div className="flex h-[21px] items-stretch bg-linear-to-b from-[#d6e7fb] via-[#b9d2f4] to-[#d8e8fc] text-[11px] text-[#1f3b70]">
      <div className="flex w-[53px] items-center border-r border-[#9ab7df] pl-[7px]">Готово</div>
      <div className="flex-1" />
      <div className="flex w-[246px] items-center border-l border-[#eff6ff] bg-linear-to-b from-[#bcd2f2] via-[#93b2e0] to-[#b4cdf2] pl-[6px]">
        <div className="flex h-[18px] w-[56px] rounded-[2px] border border-[#8aa6d0] bg-[#dce7f6]">
          <button aria-label="Обычный" className="flex flex-1 items-center justify-center bg-[#fdd37c]"><svg width="13" height="11" viewBox="0 0 13 11" fill="#fff" stroke="#6b6455"><path d="M.5.5h12v10H.5zM.5 4h12M.5 7h12M4.500.5v10M8.500.5v10" /></svg></button>
          <button aria-label="Разметка страницы" className="flex flex-1 items-center justify-center"><svg width="12" height="12" viewBox="0 0 12 12" stroke="#6a6f7a"><path d="M.5.5h11v11H.5z" fill="#a9abb0" /><path d="M3 2h6v8H3z" fill="#fff" /><path d="M4 4.500h4M4 6.500h4" /></svg></button>
          <button aria-label="Страничный" className="flex flex-1 items-center justify-center"><svg width="12" height="12" viewBox="0 0 12 12" stroke="#6a6f7a"><path d="M.5.5h11v11H.5z" fill="#a9abb0" /><path d="M1 1h4.500v7H1zM7 1h3v7H7z" fill="#fff" /></svg></button>
        </div>
        <button className="w-[43px] text-center text-[11px]">100%</button>
        <button aria-label="Уменьшить"><svg width="17" height="17" viewBox="0 0 17 17"><circle cx="8.500" cy="8.500" r="7" fill="#e6eefa" stroke="#66799c" /><path d="M5 8.500h7" stroke="#444f66" strokeWidth="2" /></svg></button>
        <div className="relative flex h-[16px] flex-1 items-center">
          <div className="h-px w-full bg-[#6684b4]" />
          <svg className="pointer-events-none absolute left-1/2 -ml-[5px]" width="10" height="12" viewBox="0 0 10 12"><path d="M.5.5h9v7L5 11.500.5 7.500z" fill="#e6eefa" stroke="#66799c" /><path d="M5 3v4" stroke="#8a9ab8" /></svg>
          <input type="range" aria-label="Масштаб" defaultValue={50} className="absolute inset-x-0 w-full opacity-0" />
        </div>
        <button aria-label="Увеличить" className="mr-[5px]"><svg width="17" height="17" viewBox="0 0 17 17"><circle cx="8.500" cy="8.500" r="7" fill="#e6eefa" stroke="#66799c" /><path d="M5 8.500h7M8.500 5v7" stroke="#444f66" strokeWidth="2" /></svg></button>
      </div>
    </div>
  );
}

const folder = <svg width="16" height="14" viewBox="0 0 16 14"><path d="M.5 12.500v-10l1-1.500h4l1.500 2h7v9.500z" fill="#e9bb3f" stroke="#a87c18" /><path d="M1.500 12.500L3 5h12.500l-1.500 7.500z" fill="#fff0a0" stroke="#c79a2e" strokeWidth=".8" /></svg>;

const tasks: { t: string; icon: React.ReactNode; on?: boolean }[] = [
  { t: "Объекты 2011г", icon: folder },
  {
    t: "отчеты на Venera-pc",
    icon: <svg width="16" height="16" viewBox="0 0 16 16"><path d="M3 8l1-6 4-1 1 1h5l-1 6z" fill="#ffe98a" stroke="#b08a20" /><path d="M2 10c4 2 8 1 11-2M8 10v3" stroke="#f3d565" strokeWidth="2.500" fill="none" /><path d="M3 14h11" stroke="#d5dae5" strokeWidth="2.500" /></svg>,
  },
  { t: "Виктор", icon: folder },
  {
    t: "Просмотр темы - Эк…",
    icon: <svg width="16" height="16" viewBox="0 0 16 16"><circle cx="8" cy="8" r="7.500" fill="#e66a14" /><circle cx="8.500" cy="6.500" r="4.500" fill="#2c56b5" /><path d="M1 4c2 0 3 1 5 1s3 1 1 3c0 3 5 3 6 0 0 5-4 7-8 5S0 8 1 4z" fill="#f79a1e" /></svg>,
  },
  {
    t: "Microsoft Excel - Гра…",
    on: true,
    icon: <svg width="16" height="16" viewBox="0 0 16 16"><path d="M4 1h9l2 2v12H4z" fill="#f4faf2" stroke="#6aa05a" /><path d="M1 4h10v10H1z" fill="#eef7ea" stroke="#3f8f3a" /><path d="M3.500 6l5 6M8.500 6l-5 6" stroke="#3f8f3a" strokeWidth="2" /></svg>,
  },
];

function Taskbar() {
  return (
    <footer className="flex h-[30px] items-stretch bg-linear-to-b from-[#3f8cf3] via-[#245edb] to-[#1d4fc0] text-[11px] text-white">
      <button className="flex w-[96px] items-center gap-[6px] rounded-r-[10px] bg-linear-to-b from-[#5eac56] via-[#3c9638] to-[#2d7a2b] pl-[10px] text-[17px] font-bold italic leading-none shadow-[inset_-3px_0_4px_#20601f]">
        <svg width="19" height="18" viewBox="0 0 19 18"><path d="M3 2c2-1 4-1 6 0L8 8C6 7 4 7 2 8z" fill="#ea5a2c" /><path d="M10 3c2 1 4 1 7 0l-1 6c-3 1-5 1-7 0z" fill="#8ccc42" /><path d="M2 9c2-1 4-1 6 0l-1 6c-2-1-4-1-6 0z" fill="#4d8df0" /><path d="M9 10c2 1 4 1 7 0l-1 6c-3 1-5 1-7 0z" fill="#f8cf3a" /></svg>
        пуск
      </button>
      <div className="flex w-[116px] items-center gap-[8px] pl-[12px]">
        <button aria-label="Internet Explorer"><svg width="16" height="16" viewBox="0 0 16 16" fill="none"><path d="M13 11c-2 4-9 3.500-9-2.500C4 3 12 2.500 12.500 8.500H5" stroke="#7cc4fa" strokeWidth="2.500" /><path d="M1 13C-1 10 8 1 15 2" stroke="#bfe2ff" /></svg></button>
        <button aria-label="Помощь"><svg width="14" height="14" viewBox="0 0 14 14"><circle cx="7" cy="7" r="6.500" fill="#f1f3f8" stroke="#aab" /><path d="M7 3v8M3 7h8" stroke="#e02424" strokeWidth="2.500" /></svg></button>
        <button aria-label="Диск"><svg width="16" height="16" viewBox="0 0 16 16"><circle cx="8.500" cy="7" r="6.500" fill="#dcdce8" stroke="#8890b0" /><circle cx="9" cy="6.500" r="2.500" fill="#7d86b5" /><path d="M2 7v8M4.500 15V8.500h3V12h-3l3 3" stroke="#111" fill="none" strokeWidth="1.500" /></svg></button>
        <button aria-label="Ещё" className="ml-auto mb-[11px] mr-[8px] text-[13px] leading-none text-[#c5dbff]">»</button>
      </div>
      <div className="flex flex-1 gap-[2px] py-[3px]">
        {tasks.map(({ t, icon, on }) => (
          <button
            key={t}
            className={
              "flex w-[158px] items-center gap-[4px] whitespace-nowrap rounded-[2px] border pl-[8px] " +
              (on ? "border-[#153e92] bg-[#1e52b7]" : "border-[#4a87ee] bg-linear-to-b from-[#4b8ff8] to-[#3474ea]")
            }
          >
            {icon}
            {t}
          </button>
        ))}
      </div>
      <div className="flex w-[40px] items-center justify-center">RL</div>
      <div className="flex w-[128px] items-center gap-[4px] border-l border-[#0d4fc0] bg-linear-to-b from-[#1fa8f5] via-[#1290e8] to-[#0f7fd8] pl-[9px] pr-[12px]">
        <svg width="15" height="15" viewBox="0 0 15 15"><path d="M0 0h15v15H0z" fill="#fff" /><path d="M1 1h4v5l5-5h4L8 7l2 3-3 1-2-2v4H1z" fill="#d8161c" /><path d="M8 8l5 5M13 8v6H8" stroke="#111" strokeWidth="2" fill="none" /></svg>
        <svg width="16" height="16" viewBox="0 0 16 16"><path d="M.5.5h15v15H.5z" fill="#0c18c8" stroke="#dce6ff" /><path d="M5 3.500v9L13 8z" fill="#fff" /></svg>
        <svg width="14" height="14" viewBox="0 0 14 14"><circle cx="7" cy="7" r="6.500" fill="#fdf27a" stroke="#b09a20" /><path d="M7 3v4l3 2.500" stroke="#222" fill="none" strokeWidth="1.500" /></svg>
        <svg width="16" height="14" viewBox="0 0 16 14"><path d="M6 1h10v12H6z" fill="#78b829" /><path d="M0 7c4-6 9-5 13 0-4 5-9 5-13 0zM3 7c2-3 5-3 7 0-2 3-5 3-7 0z" fill="none" stroke="#4b7d1a" strokeWidth="1.500" /></svg>
        <time className="ml-auto">10:53</time>
      </div>
    </footer>
  );
}

export default function App() {
  return (
    <div className={"flex min-h-screen w-full flex-col overflow-hidden bg-white " + UI}>
      <Header />
      <Ribbon />
      <FormulaBar />
      <main className="flex flex-1">
        <Outline />
        <div className="min-w-0 flex-1 overflow-hidden">
          <Sheet />
        </div>
        <VScroll />
      </main>
      <SheetTabs />
      <StatusBar />
      <Taskbar />
    </div>
  );
}
